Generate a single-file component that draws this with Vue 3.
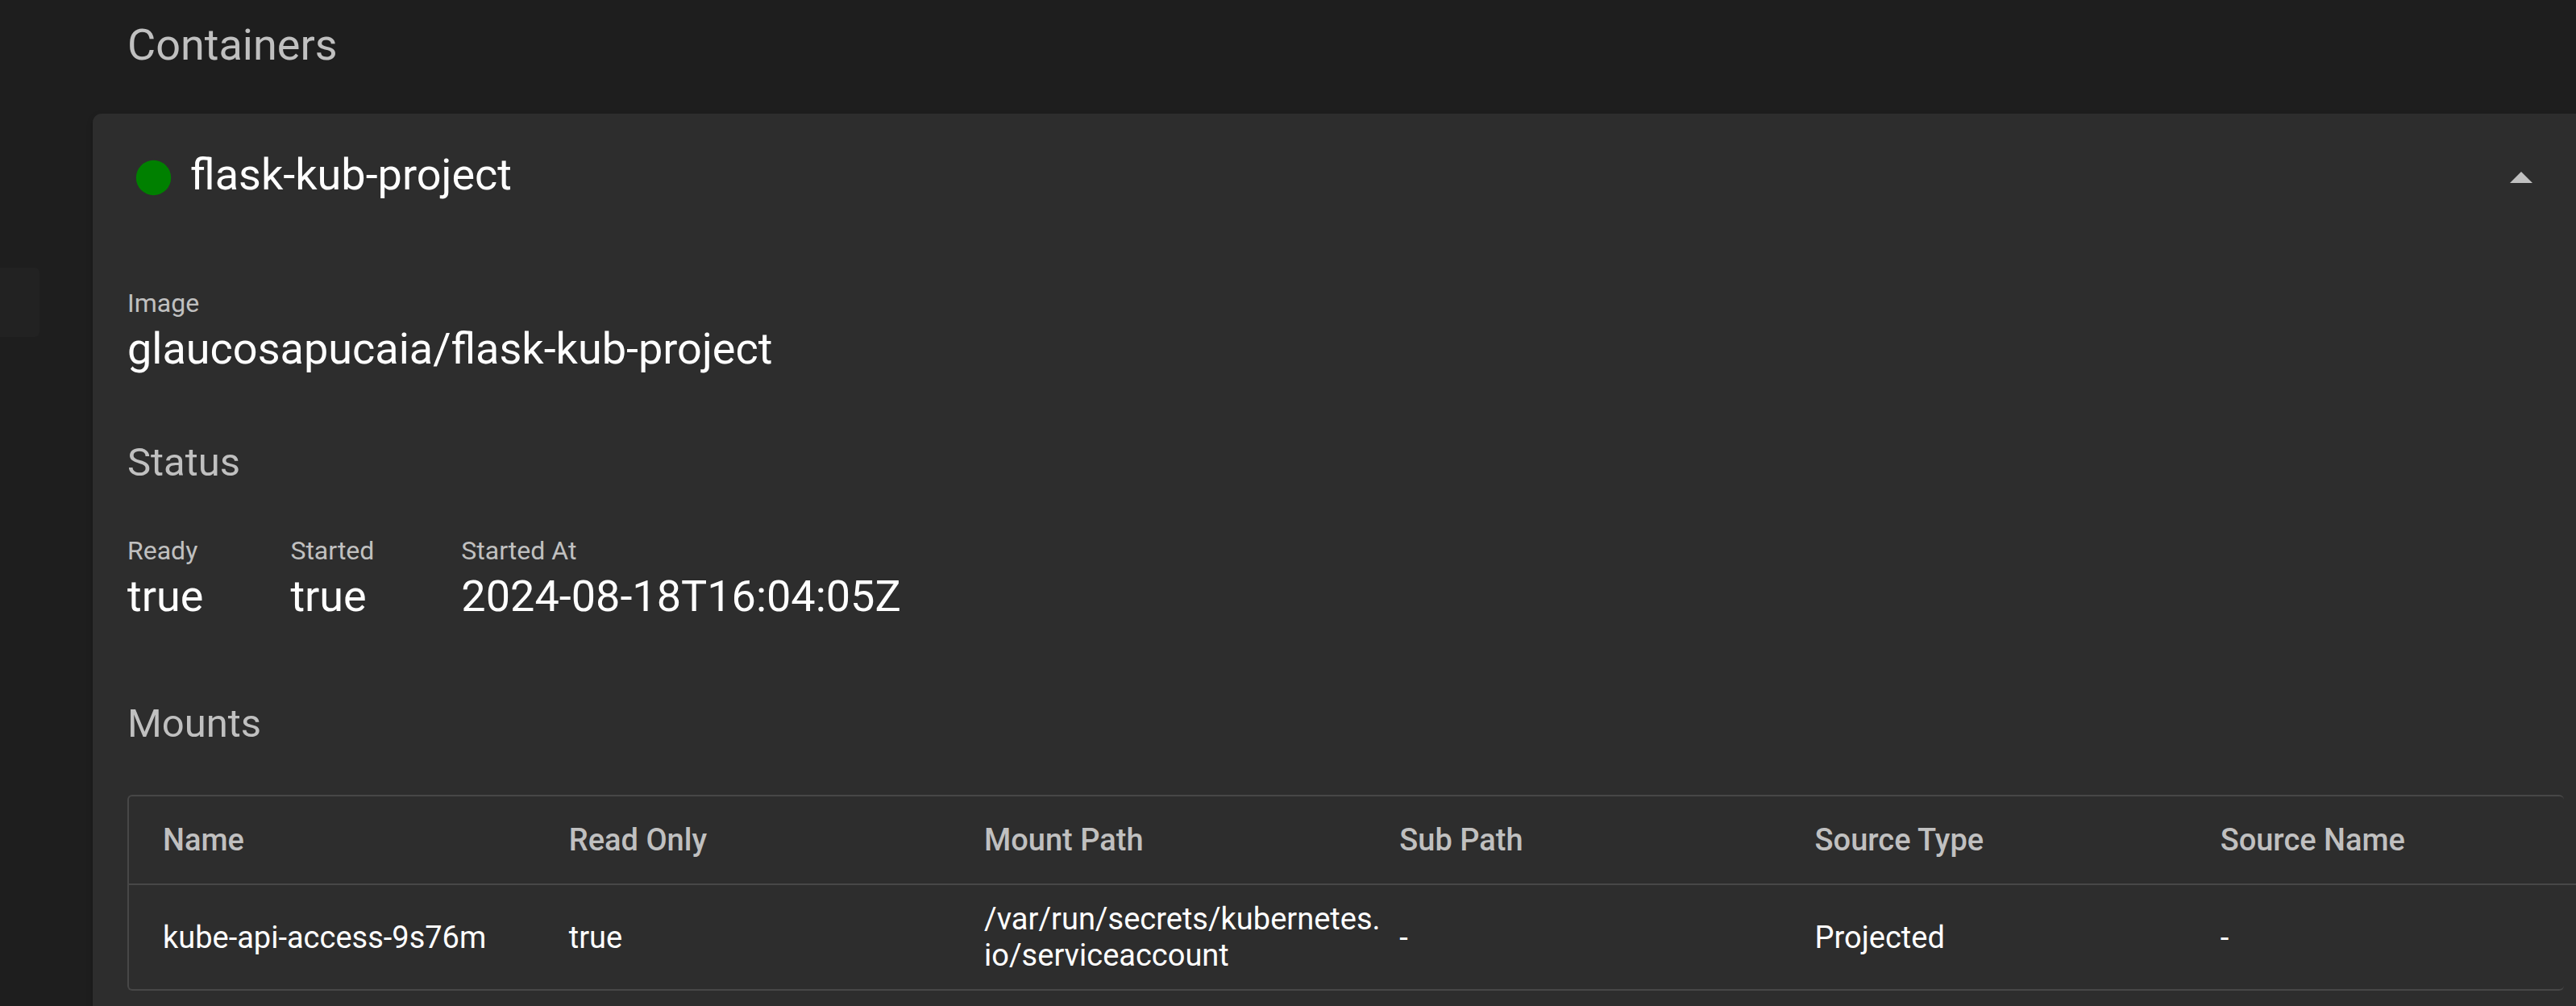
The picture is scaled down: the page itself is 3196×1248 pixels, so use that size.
<script setup>
import { ref } from 'vue'

const open = ref(true)

const status = [
  { label: 'Ready', value: 'true' },
  { label: 'Started', value: 'true' },
  { label: 'Started At', value: '2024-08-18T16:04:05Z' },
]

const columns = ['Name', 'Read Only', 'Mount Path', 'Sub Path', 'Source Type', 'Source Name']
const mounts = [
  ['kube-api-access-9s76m', 'true', '/var/run/secrets/kubernetes.io/serviceaccount', '-', 'Projected', '-'],
]
</script>

<template>
  <div class="page">
    <aside class="rail"><div class="rail-item"></div></aside>
    <main class="content">
      <h2 class="page-title">Containers</h2>
      <section class="card">
        <header class="card-header">
          <svg class="dot" viewBox="0 0 54 54" aria-hidden="true"><circle cx="27.5" cy="27.5" r="21.7" fill="#008000" /></svg>
          <h3 class="card-title">flask-kub-project</h3>
          <button class="toggle" type="button" aria-label="Toggle details" :aria-expanded="open" @click="open = !open">
            <svg viewBox="0 0 28 14" aria-hidden="true"><path d="M0 14 14 0l14 14z" fill="currentColor" /></svg>
          </button>
        </header>
        <div v-if="open" class="card-body">
          <dl class="props">
            <div class="prop">
              <dt>Image</dt>
              <dd>glaucosapucaia/flask-kub-project</dd>
            </div>
          </dl>
          <h4 class="section-title">Status</h4>
          <dl class="props">
            <div v-for="item in status" :key="item.label" class="prop">
              <dt>{{ item.label }}</dt>
              <dd>{{ item.value }}</dd>
            </div>
          </dl>
          <h4 class="section-title mounts-title">Mounts</h4>
          <div class="table-box">
            <table>
              <colgroup>
                <col class="col-name" />
                <col class="col-mid" />
                <col class="col-mid" />
                <col class="col-mid" />
                <col class="col-type" />
                <col />
              </colgroup>
              <thead>
                <tr><th v-for="c in columns" :key="c" scope="col">{{ c }}</th></tr>
              </thead>
              <tbody>
                <tr v-for="row in mounts" :key="row[0]">
                  <td v-for="(cell, i) in row" :key="i">{{ cell }}</td>
                </tr>
              </tbody>
            </table>
          </div>
        </div>
      </section>
    </main>
  </div>
</template>

<style>
body {
  background: #1e1e1e;
}
</style>

<style scoped>
.page {
  display: flex;
  height: 100vh;
  overflow: hidden;
  background: #1e1e1e;
  color: #fff;
  font-family: Roboto, sans-serif;
}
.rail {
  flex: none;
  width: 115px;
  padding-top: 332px;
  box-sizing: border-box;
}
.rail-item {
  width: 49px;
  height: 86px;
  border-radius: 0 6px 6px 0;
  background: #222;
}
.content {
  flex: 1;
  min-width: 0;
}
h2, h3, h4, dl, dt, dd {
  margin: 0;
  font-weight: 400;
}
.page-title {
  padding: 24px 43px 53px;
  font-size: 54px;
  line-height: 64px;
  color: #c0c0c0;
}
.card {
  min-height: 100vh;
  border-radius: 11px 0 0 0;
  background: #2d2d2d;
  box-shadow: 0 5px 3px -3px rgba(0, 0, 0, 0.2), 0 3px 3px rgba(0, 0, 0, 0.14), 0 3px 8px rgba(0, 0, 0, 0.12);
}
.card-header {
  display: flex;
  align-items: center;
  padding: 44px 43px 43px 48px;
}
.dot {
  width: 54px;
  height: 54px;
}
.card-title {
  flex: 1;
  margin-left: 19px;
  padding-bottom: 6px;
  font-size: 54px;
  line-height: 64px;
}
.toggle {
  display: flex;
  align-items: center;
  justify-content: center;
  width: 50px;
  height: 64px;
  padding: 0;
  border: 0;
  background: none;
  color: #c0c0c0;
}
.toggle svg {
  width: 28px;
  height: 14px;
}
.card-body {
  padding: 57px 15px 20px 43px;
}
.props {
  display: flex;
  gap: 108px;
}
.prop dt {
  font-size: 32px;
  line-height: 42px;
  color: #c0c0c0;
}
.prop dd {
  font-size: 54px;
  line-height: 72px;
}
.section-title {
  margin: 77px 0 60px;
  font-size: 49px;
  line-height: 56px;
  color: #c0c0c0;
}
.mounts-title {
  margin-top: 94px;
}
.table-box {
  border: 2px solid #474747;
  border-right: 0;
  border-radius: 6px;
}
table {
  width: calc(100% + 28px);
  table-layout: fixed;
  border-spacing: 0;
  font-size: 38px;
  line-height: 45px;
}
.col-name { width: 17.9%; }
.col-mid { width: 16.9%; }
.col-type { width: 16.5%; }
th, td {
  text-align: left;
  overflow-wrap: anywhere;
}
th {
  padding: 32px 20px 31px 0;
  border-bottom: 2px solid #474747;
  font-weight: 500;
  color: #c0c0c0;
}
td {
  padding: 20px 20px 19px 0;
}
th:first-child, td:first-child {
  padding-left: 42px;
}
</style>
